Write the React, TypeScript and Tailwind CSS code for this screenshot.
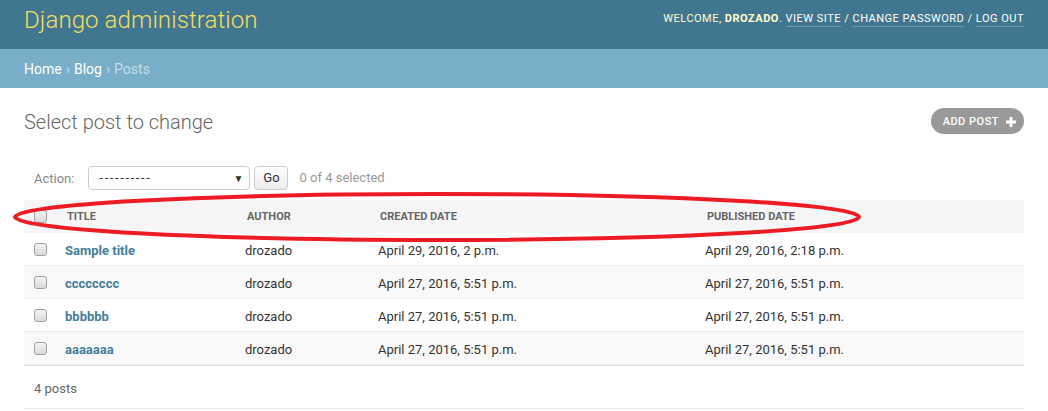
import React from 'react';

const posts = [
  { title: 'Sample title', author: 'drozado', created: 'April 29, 2016, 2 p.m.', published: 'April 29, 2016, 2:18 p.m.' },
  { title: 'cccccccc', author: 'drozado', created: 'April 27, 2016, 5:51 p.m.', published: 'April 27, 2016, 5:51 p.m.' },
  { title: 'bbbbbb', author: 'drozado', created: 'April 27, 2016, 5:51 p.m.', published: 'April 27, 2016, 5:51 p.m.' },
  { title: 'aaaaaaa', author: 'drozado', created: 'April 27, 2016, 5:51 p.m.', published: 'April 27, 2016, 5:51 p.m.' },
];

const Checkbox: React.FC = () => (
  <span className="block w-[13px] h-[13px] rounded-[3px] border border-[#a0a0a0] bg-gradient-to-b from-[#f4f4f4] to-[#d9d9d9]" />
);

const App: React.FC = () => {
  return (
    <div className="relative w-full min-h-[411px] bg-white font-['Roboto','Liberation_Sans',sans-serif] text-[13px] text-[#333]">
      {/* header */}
      <header className="h-[49px] bg-[#417690] px-6 flex justify-between items-start">
        <h1 className="mt-[8px] text-[24px] leading-[24px] font-light text-[#f5dd5d] tracking-[0.1px]">Django administration</h1>
        <div className="mt-[12px] text-[11px] leading-[14px] uppercase tracking-[0.5px] text-[#ffc]">
          Welcome, <strong className="font-bold">drozado</strong>.{' '}
          <a className="text-white border-b border-white/25 pb-[1px]">View site</a> /{' '}
          <a className="text-white border-b border-white/25 pb-[1px]">Change password</a> /{' '}
          <a className="text-white border-b border-white/25 pb-[1px]">Log out</a>
        </div>
      </header>

      {/* breadcrumbs */}
      <div className="h-[39px] bg-[#79aec8] px-6 pt-[2px] flex items-center text-[14px] text-[#c4dce8]">
        <a className="text-white">Home</a>
        <span className="mx-[4px]">›</span>
        <a className="text-white">Blog</a>
        <span className="mx-[4px]">›</span>
        <span>Posts</span>
      </div>

      {/* content */}
      <div className="px-6">
        <div className="flex justify-between items-start mt-[22px]">
          <h2 className="text-[20px] leading-[24px] font-light text-[#666]">Select post to change</h2>
          <a className="mt-[-2px] h-[26px] pt-[2px] pl-[12px] pr-[8px] rounded-full bg-[#999] text-white text-[11px] font-medium uppercase tracking-[0.5px] flex items-center gap-[7px]">
            Add post
            <svg width="10" height="10" viewBox="0 0 10 10">
              <path d="M3.6 0h2.8v3.6H10v2.8H6.4V10H3.6V6.4H0V3.6h3.6z" fill="white" />
            </svg>
          </a>
        </div>

        {/* actions */}
        <div className="mt-[32px] h-[24px] pl-[10px] flex items-center text-[13px]">
          <span className="text-[#888] pt-[1px]">Action:</span>
          <div className="ml-[14px] w-[162px] h-[24px] border border-[#ccc] rounded-[4px] bg-white flex items-center justify-between pl-[10px] pr-[6px] text-[#333]">
            <span className="tracking-[1.6px]">----------</span>
            <span className="text-[10px]">▼</span>
          </div>
          <div className="ml-[4px] w-[34px] h-[24px] border border-[#ccc] rounded-[4px] bg-gradient-to-b from-white to-[#ececec] flex items-center justify-center text-[#333]">Go</div>
          <span className="ml-[11px] text-[#999]">0 of 4 selected</span>
        </div>

        {/* table */}
        <div className="mt-[10px]">
          <div className="h-[33px] bg-[#f6f6f6] flex items-center text-[11px] font-bold uppercase text-[#666]">
            <div className="w-[33px] pl-[10px]"><Checkbox /></div>
            <div className="w-[180px] pl-[10px] pt-[2px]">Title</div>
            <div className="w-[133px] pl-[10px] pt-[2px]">Author</div>
            <div className="w-[327px] pl-[10px] pt-[2px]">Created date</div>
            <div className="flex-1 pl-[10px] pt-[2px]">Published date</div>
          </div>
          {posts.map((p, i) => (
            <div
              key={p.title}
              className={`h-[33px] border-b border-[#eee] flex items-center ${i % 2 === 1 ? 'bg-[#f9f9f9]' : 'bg-white'}`}
            >
              <div className="w-[33px] pl-[10px]"><Checkbox /></div>
              <div className="w-[180px] pl-[8px] pt-[3px] font-bold text-[#447e9b]">{p.title}</div>
              <div className="w-[133px] pl-[8px] pt-[3px]">{p.author}</div>
              <div className="w-[327px] pl-[8px] pt-[3px]">{p.created}</div>
              <div className="flex-1 pl-[8px] pt-[3px]">{p.published}</div>
            </div>
          ))}
          <div className="h-[44px] border-t border-[#ddd] border-b border-b-[#eee] flex items-center pl-[10px] pt-[3px] text-[#666]">
            4 posts
          </div>
        </div>
      </div>

      {/* red annotation */}
      <svg className="absolute left-0 top-0 pointer-events-none" width="1048" height="411">
        <ellipse cx="437" cy="217" rx="422" ry="23" fill="none" stroke="#ed1c24" strokeWidth="4" />
      </svg>
    </div>
  );
};

export default App;
